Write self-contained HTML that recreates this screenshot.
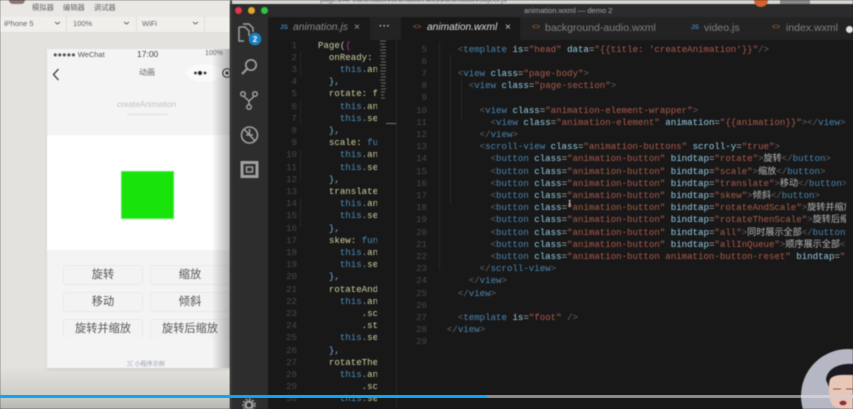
<!DOCTYPE html>
<html><head><meta charset="utf-8">
<style>
html,body{margin:0;padding:0;background:#181818;overflow:hidden;width:853px;height:409px}
#r{position:relative;width:853px;height:409px;overflow:hidden;font-family:"Liberation Sans","Noto Sans CJK SC",sans-serif;background:#181818}
#r div{position:absolute;box-sizing:border-box}
.z{filter:blur(.6px)}
pre{position:absolute;margin:0;font-family:"Liberation Mono","Noto Sans CJK SC",monospace;font-size:9.1px;line-height:12.2px;white-space:pre}
.b{color:#666}.t{color:#4a86b2}.a{color:#93cfe6}.s{color:#ad5a4c}.x{color:#b9b9b9}
.y{color:#cfcfa0}.h{color:#4c8dbb}.p{color:#9a9a9a}.k{color:#79aeda}.m{color:#b5388f}.w{color:#c6c6c6}
.btn{background:#f3f3f3;border:1px solid #e9e9e9;border-radius:3px;text-align:center;color:#555;font-size:11.200px;line-height:18px;height:20px;width:80px}
</style></head><body>
<div id="r">
<div class="z" style="left:0;top:0;width:232px;height:409px;background:#e3e2dd">
  <div style="left:0;top:0;width:232px;height:17px;background:#e9e8e5"></div>
  <div style="left:0;top:17px;width:232px;height:15px;background:#f0efec"></div>
  <div style="left:9px;top:0;width:16px;height:4px;background:#8d7570;border-radius:0 0 8px 8px"></div>
  <div style="left:32px;top:3px;color:#666;font-size:7.300px;white-space:nowrap;word-spacing:7px">模拟器 编辑器 调试器</div>
  <div style="left:4px;top:19px;color:#666;font-size:7.500px">iPhone 5</div>
  <div style="left:73px;top:19px;color:#666;font-size:7.500px">100%</div>
  <div style="left:142px;top:19px;color:#666;font-size:7.500px">WiFi</div>
  <div style="left:66px;top:17px;width:1px;height:15px;background:#e0dfdb"></div>
  <div style="left:136px;top:17px;width:1px;height:15px;background:#e0dfdb"></div>
  <div style="left:204px;top:17px;width:1px;height:15px;background:#e0dfdb"></div>
  <svg style="position:absolute;left:0;top:0" width="232" height="32"><path d="M55 22l2.500 2 2.500-2M124 22l2.500 2 2.500-2M193 22l2.500 2 2.500-2" fill="none" stroke="#666" stroke-width="1"/></svg>
  <div style="left:0;top:368px;width:232px;height:41px;background:linear-gradient(#e2e1dc,#cfcec9 65%,#b6b5b0)"></div>
  <div style="left:47px;top:49px;width:185px;height:319px;background:#f4f4f4;box-shadow:0 2px 3px #d0cfca"></div>
  <div style="left:47px;top:135px;width:185px;height:115px;background:#fff"></div>
  <div style="left:53px;top:50px;color:#555;font-size:7.500px;white-space:nowrap">●●●●● WeChat</div>
  <div style="left:137px;top:49px;color:#444;font-size:8.500px">17:00</div>
  <div style="left:205px;top:50px;color:#666;font-size:7px">100%</div>
  <svg style="position:absolute;left:0;top:60px" width="232" height="28"><path d="M58.500 9l-5 5.500 5 5.500" fill="none" stroke="#333" stroke-width="1.300"/><ellipse cx="204" cy="13" rx="18" ry="9" fill="#fafafa"/><circle cx="195.500" cy="13" r="1.400" fill="#333"/><circle cx="200" cy="13" r="2" fill="#222"/><circle cx="205" cy="13" r="1.400" fill="#333"/><circle cx="227" cy="13" r="4.300" fill="none" stroke="#333" stroke-width="1.200"/><circle cx="227" cy="13" r="1.600" fill="#222"/></svg>
  <div style="left:139px;top:67px;color:#666;font-size:8px">动画</div>
  <div style="left:117px;top:100px;color:#c3c3c3;font-size:8.200px">createAnimation</div>
  <div style="left:127px;top:114px;width:41px;height:1px;background:#dcdcdc"></div>
  <div style="left:121px;top:171px;width:53px;height:48px;background:#18e30b;border:1px solid #4fe84a"></div>
  <div class="btn" style="left:63px;top:265px">旋转</div>
  <div class="btn" style="left:150px;top:265px">缩放</div>
  <div class="btn" style="left:63px;top:292px">移动</div>
  <div class="btn" style="left:150px;top:292px">倾斜</div>
  <div class="btn" style="left:63px;top:319px;border-bottom:0">旋转并缩放</div>
  <div class="btn" style="left:150px;top:319px;border-bottom:0">旋转后缩放</div>
  <div style="left:127px;top:362px;color:#8f99a8;font-size:6px;height:6px;line-height:6px;white-space:nowrap">⌘ 小程序示例</div>
  <div style="left:212px;top:49px;width:20px;height:319px;background:linear-gradient(90deg,rgba(90,90,90,0),rgba(70,70,70,.45))"></div>
</div>

<div class="z" style="left:230px;top:0;width:623px;height:409px;background:#181818">
  <div style="left:0;top:0;width:623px;height:4px;background:#d8d7d3;overflow:hidden">
    <div style="left:90px;top:-5px;color:#777;font-size:7.500px;white-space:nowrap">pages/API/animation/animation.wxss/animation/object.js</div>
    <div style="left:550px;top:0;width:30px;height:4px;background:#8a8a88"></div>
  </div>
  <div style="left:0;top:4px;width:623px;height:13px;background:#2b2b2b"></div>
  <div style="left:524px;top:0;width:14px;height:7px;background:#d2622e;border-radius:0 0 7px 7px"></div>
  <div style="left:294px;top:6px;color:#a5a5a5;font-size:7.500px;white-space:nowrap">animation.wxml — demo 2</div>
  <div style="left:5px;top:7px;width:7px;height:7px;border-radius:50%;background:#e0354c"></div>
  <div style="left:18px;top:7px;width:7px;height:7px;border-radius:50%;background:#e5a52a"></div>
  <div style="left:31px;top:7px;width:7px;height:7px;border-radius:50%;background:#2fc43f"></div>
  <div style="left:0;top:17px;width:38px;height:392px;background:#2d2d2d"></div>
  <div style="left:38px;top:17px;width:585px;height:23px;background:#232323"></div>
  <div style="left:38px;top:17px;width:102px;height:23px;background:#1a1a1a"></div>
  <div style="left:171px;top:17px;width:119px;height:23px;background:#181818"></div>
  <div style="left:166px;top:40px;width:1px;height:369px;background:#262626"></div>
  <div style="left:50px;top:24px;color:#3f7fb5;font-size:6.500px;font-weight:bold">JS</div>
  <div style="left:63px;top:22px;color:#8a8a8a;font-size:10.300px;font-style:italic;white-space:nowrap">animation.js</div>
  <div style="left:124px;top:22px;color:#9a9a9a;font-size:10px">×</div>
  <div style="left:149px;top:21px;color:#bbb;font-size:10px;font-weight:bold;letter-spacing:.4px">···</div>
  <div style="left:183px;top:24px;color:#b4623a;font-size:7px">&lt;&gt;</div>
  <div style="left:197px;top:22px;color:#ddd;font-size:10.200px;font-style:italic;white-space:nowrap">animation.wxml</div>
  <div style="left:275px;top:22px;color:#ccc;font-size:10px">×</div>
  <div style="left:302px;top:24px;color:#b4623a;font-size:7px">&lt;&gt;</div>
  <div style="left:315px;top:22px;color:#808080;font-size:10.500px;white-space:nowrap">background-audio.wxml</div>
  <div style="left:461px;top:24px;color:#3f7fb5;font-size:6.500px;font-weight:bold">JS</div>
  <div style="left:474px;top:22px;color:#808080;font-size:10.500px">video.js</div>
  <div style="left:542px;top:24px;color:#b4623a;font-size:7px">&lt;&gt;</div>
  <div style="left:556px;top:22px;color:#808080;font-size:10.500px">index.wxml</div>
  <div style="left:616px;top:26px;width:7px;height:7px;border-radius:50%;background:#ddd"></div>

  <svg style="position:absolute;left:0;top:17px" width="38" height="392">
    <path d="M9 10h6l4 4v5M9 10v14h5M13 7h6l4 4v4" fill="none" stroke="#a0a0a0" stroke-width="1.500"/>
    <circle cx="25" cy="22" r="6.300" fill="#1a7fc1"/><text x="25" y="25" font-size="8" font-weight="bold" fill="#fff" text-anchor="middle" font-family="Liberation Sans">2</text>
    <circle cx="21" cy="48" r="5.200" fill="none" stroke="#a0a0a0" stroke-width="1.700"/><path d="M17 52l-5 5" stroke="#a0a0a0" stroke-width="2"/>
    <circle cx="13" cy="77" r="2.300" fill="none" stroke="#a0a0a0" stroke-width="1.500"/><circle cx="25" cy="77" r="2.300" fill="none" stroke="#a0a0a0" stroke-width="1.500"/><circle cx="19" cy="90" r="2.300" fill="none" stroke="#a0a0a0" stroke-width="1.500"/><path d="M13.500 79l5.500 5v4M24.500 79l-5.500 5" fill="none" stroke="#a0a0a0" stroke-width="1.500"/>
    <circle cx="19.500" cy="118" r="8" fill="none" stroke="#a0a0a0" stroke-width="1.600"/><path d="M14 112l11 12M16 118h7M19.500 112v5" stroke="#a0a0a0" stroke-width="1.500" fill="none"/>
    <path d="M12 145.500h15v14h-15z" fill="none" stroke="#a0a0a0" stroke-width="3"/><path d="M16.500 150h6v5h-6z" fill="none" stroke="#a0a0a0" stroke-width="1.500"/>
    <circle cx="19" cy="388" r="3.500" fill="none" stroke="#a0a0a0" stroke-width="2.500"/><circle cx="19" cy="388" r="6" fill="none" stroke="#a0a0a0" stroke-width="1.500" stroke-dasharray="2 1.500"/>
  </svg>

  <div style="left:38px;top:40px;width:109px;height:369px;overflow:hidden">
  <pre style="left:0;top:-0.500px;width:29px;text-align:right;color:#474747;">1
2
3
4
5
6
7
8
9
10
11
12
13
14
15
16
17
18
19
20
21
22
23
24
25
26
27
28
29
30</pre>
  <pre style="left:50px;top:-0.500px"><span class="y">Page</span><span class="w">(</span><span class="m">{</span>
  <span class="y">onReady:</span>
    <span class="h">this</span><span class="p">.</span><span class="y">an</span>
  <span class="k">},</span>
  <span class="y">rotate:</span> <span class="y">f</span>
    <span class="h">this</span><span class="p">.</span><span class="y">an</span>
    <span class="h">this</span><span class="p">.</span><span class="y">se</span>
  <span class="k">},</span>
  <span class="y">scale:</span> <span class="h">fu</span>
    <span class="h">this</span><span class="p">.</span><span class="y">an</span>
    <span class="h">this</span><span class="p">.</span><span class="y">se</span>
  <span class="k">},</span>
  <span class="y">translate</span>
    <span class="h">this</span><span class="p">.</span><span class="y">an</span>
    <span class="h">this</span><span class="p">.</span><span class="y">se</span>
  <span class="k">},</span>
  <span class="y">skew:</span> <span class="h">fun</span>
    <span class="h">this</span><span class="p">.</span><span class="y">an</span>
    <span class="h">this</span><span class="p">.</span><span class="y">se</span>
  <span class="k">},</span>
  <span class="y">rotateAnd</span>
    <span class="h">this</span><span class="p">.</span><span class="y">an</span>
        <span class="y">.sc</span>
        <span class="y">.st</span>
    <span class="h">this</span><span class="p">.</span><span class="y">se</span>
  <span class="k">},</span>
  <span class="y">rotateThe</span>
    <span class="h">this</span><span class="p">.</span><span class="y">an</span>
        <span class="y">.sc</span>
    <span class="h">this</span><span class="p">.</span><span class="y">se</span></pre>
  </div>
  <svg style="position:absolute;left:149px;top:40px" width="8" height="62"><path d="M1 1h6M1 4h5M2 7h5M1 10h6M2 13h5M1 16h6M2 19h4M2 22h5M1 25h6M2 28h5M1 31h6M2 34h4M2 37h5M1 40h5M2 43h5M2 46h4M2 49h5M2 52h4M2 55h3M2 58h4" stroke="#5f6b5f" stroke-width="1"/></svg>
  <div style="left:156px;top:123px;width:10px;height:1px;background:#777"></div>

  <div style="left:171px;top:40px;width:445px;height:369px;overflow:hidden">
  <pre style="left:0;top:3.500px;width:26px;text-align:right;color:#474747">5
6
7
8
9
10
11
12
13
14
15
16
17
18
19
20
21
22
23
24
25
26
27
28
29</pre>
  <pre style="left:35px;top:3.500px"><span class="t">    </span><span class="b">&lt;</span><span class="t">template</span> <span class="a">is</span><span class="x">=</span><span class="s">"head"</span> <span class="a">data</span><span class="x">=</span><span class="s">"{{title: 'createAnimation'}}"</span><span class="b">/&gt;</span>

    <span class="b">&lt;</span><span class="t">view</span> <span class="a">class</span><span class="x">=</span><span class="s">"page-body"</span><span class="b">&gt;</span>
      <span class="b">&lt;</span><span class="t">view</span> <span class="a">class</span><span class="x">=</span><span class="s">"page-section"</span><span class="b">&gt;</span>

        <span class="b">&lt;</span><span class="t">view</span> <span class="a">class</span><span class="x">=</span><span class="s">"animation-element-wrapper"</span><span class="b">&gt;</span>
          <span class="b">&lt;</span><span class="t">view</span> <span class="a">class</span><span class="x">=</span><span class="s">"animation-element"</span> <span class="a">animation</span><span class="x">=</span><span class="s">"{{animation}}"</span><span class="b">&gt;&lt;/</span><span class="t">view</span><span class="b">&gt;</span>
        <span class="b">&lt;/</span><span class="t">view</span><span class="b">&gt;</span>
        <span class="b">&lt;</span><span class="t">scroll-view</span> <span class="a">class</span><span class="x">=</span><span class="s">"animation-buttons"</span> <span class="a">scroll-y</span><span class="x">=</span><span class="s">"true"</span><span class="b">&gt;</span>
          <span class="b">&lt;</span><span class="t">button</span> <span class="a">class</span><span class="x">=</span><span class="s">"animation-button"</span> <span class="a">bindtap</span><span class="x">=</span><span class="s">"rotate"</span><span class="b">&gt;</span><span class="x">旋转</span><span class="b">&lt;/</span><span class="t">button</span><span class="b">&gt;</span>
          <span class="b">&lt;</span><span class="t">button</span> <span class="a">class</span><span class="x">=</span><span class="s">"animation-button"</span> <span class="a">bindtap</span><span class="x">=</span><span class="s">"scale"</span><span class="b">&gt;</span><span class="x">缩放</span><span class="b">&lt;/</span><span class="t">button</span><span class="b">&gt;</span>
          <span class="b">&lt;</span><span class="t">button</span> <span class="a">class</span><span class="x">=</span><span class="s">"animation-button"</span> <span class="a">bindtap</span><span class="x">=</span><span class="s">"translate"</span><span class="b">&gt;</span><span class="x">移动</span><span class="b">&lt;/</span><span class="t">button</span><span class="b">&gt;</span>
          <span class="b">&lt;</span><span class="t">button</span> <span class="a">class</span><span class="x">=</span><span class="s">"animation-button"</span> <span class="a">bindtap</span><span class="x">=</span><span class="s">"skew"</span><span class="b">&gt;</span><span class="x">倾斜</span><span class="b">&lt;/</span><span class="t">button</span><span class="b">&gt;</span>
          <span class="b">&lt;</span><span class="t">button</span> <span class="a">class</span><span class="x">=</span><span class="s">"animation-button"</span> <span class="a">bindtap</span><span class="x">=</span><span class="s">"rotateAndScale"</span><span class="b">&gt;</span><span class="x">旋转并缩放</span><span class="b">&lt;/</span><span class="t">button</span><span class="b">&gt;</span>
          <span class="b">&lt;</span><span class="t">button</span> <span class="a">class</span><span class="x">=</span><span class="s">"animation-button"</span> <span class="a">bindtap</span><span class="x">=</span><span class="s">"rotateThenScale"</span><span class="b">&gt;</span><span class="x">旋转后缩放</span><span class="b">&lt;/</span><span class="t">button</span><span class="b">&gt;</span>
          <span class="b">&lt;</span><span class="t">button</span> <span class="a">class</span><span class="x">=</span><span class="s">"animation-button"</span> <span class="a">bindtap</span><span class="x">=</span><span class="s">"all"</span><span class="b">&gt;</span><span class="x">同时展示全部</span><span class="b">&lt;/</span><span class="t">button</span><span class="b">&gt;</span>
          <span class="b">&lt;</span><span class="t">button</span> <span class="a">class</span><span class="x">=</span><span class="s">"animation-button"</span> <span class="a">bindtap</span><span class="x">=</span><span class="s">"allInQueue"</span><span class="b">&gt;</span><span class="x">顺序展示全部</span><span class="b">&lt;/</span><span class="t">button</span><span class="b">&gt;</span>
          <span class="b">&lt;</span><span class="t">button</span> <span class="a">class</span><span class="x">=</span><span class="s">"animation-button animation-button-reset"</span> <span class="a">bindtap</span><span class="x">=</span><span class="s">"reset"</span><span class="b">&gt;</span>
        <span class="b">&lt;/</span><span class="t">scroll-view</span><span class="b">&gt;</span>
      <span class="b">&lt;/</span><span class="t">view</span><span class="b">&gt;</span>
    <span class="b">&lt;/</span><span class="t">view</span><span class="b">&gt;</span>

    <span class="b">&lt;</span><span class="t">template</span> <span class="a">is</span><span class="x">=</span><span class="s">"foot"</span> <span class="b">/&gt;</span>
  <span class="b">&lt;/</span><span class="t">view</span><span class="b">&gt;</span>
</pre>
  </div>
  <svg style="position:absolute;left:0;top:0" width="623" height="409"><path d="M209.500 42v228M220.500 54v150M231.500 80v40" stroke="#262626" stroke-width="1"/><path d="M70.500 52v25M70.500 100v25M70.500 150v30M70.500 198v30" stroke="#262626" stroke-width="1"/></svg>
  <div style="left:338px;top:200px;width:5px;height:10px;color:#ddd;font-size:10px;line-height:10px;font-family:'Liberation Serif',serif">I</div>
</div>

<div style="left:230px;top:0;width:2px;height:409px;background:#3a3a3a;filter:blur(.5px)"></div>
<svg class="z" style="position:absolute;left:795px;top:345px" width="58" height="64">
  <circle cx="53" cy="51" r="47" fill="#b6b7c4"/>
  <path d="M34 40c0 22 2 24 24 24V28H36z" fill="#e8c6b8"/>
  <path d="M31 35c1-12 14-17 27-16v11c-8 0-17-1-22 3-2 2-2 6-2 9z" fill="#1a1a20"/>
  <path d="M38 44h8M51 44h7" stroke="#7a5a50" stroke-width="1.100"/>
  <ellipse cx="48" cy="58" rx="3.500" ry="2.300" fill="#8c2a36"/>
</svg>
<div style="left:0;top:395px;width:853px;height:3px;background:#8b8b8b"></div>
<div style="left:801px;top:395px;width:52px;height:3px;background:#cfcfd4"></div>
<div style="left:0;top:395px;width:487px;height:3px;background:#0ea5f4"></div>
</div>
</body></html>
